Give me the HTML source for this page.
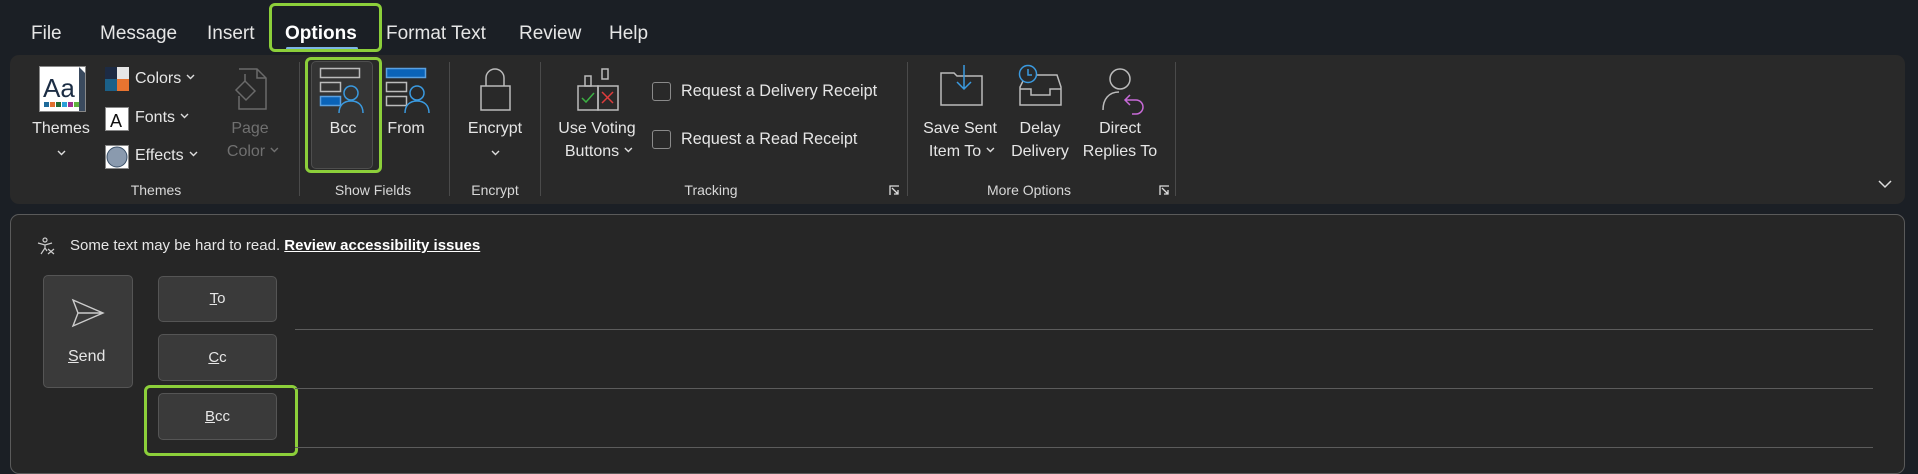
<!DOCTYPE html>
<html><head><meta charset="utf-8"><style>
*{margin:0;padding:0;box-sizing:border-box}
body{width:1918px;height:461px;background:#1b1f25;font-family:"Liberation Sans",sans-serif;color:#e6e6e6;position:relative;overflow:hidden}
.a{position:absolute;white-space:nowrap}
.tab{font-size:19px;top:23px}
.rib{left:10px;top:55px;width:1895px;height:149px;background:#292929;border-radius:9px}
.lbl{font-size:15px;text-align:center;transform:translateX(-50%)}
.sep{width:1px;background:#4a4a4a;top:62px;height:134px}
.gl{font-size:14px;color:#d8d8d8;transform:translateX(-50%);top:182px}
.cb{width:19px;height:19px;border:1.5px solid #8a8a8a;border-radius:3px}
.panel{left:10px;top:214px;width:1895px;height:260px;background:#262626;border:1px solid #5a5a5a;border-radius:9px}
.btn{background:#3a3a3a;border:1px solid #555;border-radius:5px;font-size:15px;text-align:center}
.ln{height:1px;background:#5c5c5c;left:295px;width:1578px}
.green{border:3px solid #8ccf3a;border-radius:6px}
svg{position:absolute;overflow:visible}
svg.ch{position:static;display:inline-block;vertical-align:middle;margin-left:5px;margin-top:-3px}
</style></head><body>
<div class="a tab" style="left:31px">File</div>
<div class="a tab" style="left:100px">Message</div>
<div class="a tab" style="left:207px">Insert</div>
<div class="a tab" style="left:285px;font-weight:bold;color:#fff">Options</div>
<div class="a" style="left:286px;top:47px;width:72px;height:3px;background:#7cb6e6;border-radius:2px"></div>
<div class="a green" style="left:269px;top:3px;width:113px;height:49px"></div>
<div class="a tab" style="left:386px">Format Text</div>
<div class="a tab" style="left:519px">Review</div>
<div class="a tab" style="left:609px">Help</div>

<div class="a rib"></div>
<!-- Themes -->
<svg style="left:39px;top:66px" width="48" height="46"><rect x="0.5" y="0.5" width="46" height="45" fill="#fff" stroke="#888"/><path d="M40 1 L46 7 L46 45 L40 45Z" fill="#3a4a5e"/><text x="4" y="31" font-size="26" fill="#1c2d44" font-family="Liberation Sans">Aa</text><rect x="5" y="36" width="5" height="5" fill="#1e6a9a"/><rect x="11" y="36" width="5" height="5" fill="#e07030"/><rect x="17" y="36" width="5" height="5" fill="#226b34"/><rect x="23" y="36" width="5" height="5" fill="#2aa0d8"/><rect x="29" y="36" width="5" height="5" fill="#a03090"/><rect x="35" y="36" width="5" height="5" fill="#60b040"/></svg>
<div class="a lbl" style="left:61px;top:120px;font-size:16px">Themes</div>
<svg style="left:57px;top:150px" width="9" height="6" fill="none" stroke="#ddd" stroke-width="1.4"><path d="M1 1L4.5 4.5L8 1"/></svg>
<svg style="left:105px;top:67px" width="24" height="24"><rect width="12" height="12" fill="#1d2b44"/><rect x="12" width="12" height="12" fill="#e6e6e6"/><rect y="12" width="12" height="12" fill="#1b6088"/><rect x="12" y="12" width="12" height="12" fill="#e87430"/></svg>
<div class="a" style="left:135px;top:70px;font-size:16px">Colors<svg class="ch" width="9" height="6" fill="none" stroke="#ddd" stroke-width="1.4"><path d="M1 1L4.5 4.5L8 1"/></svg></div>
<svg style="left:105px;top:107px" width="24" height="24"><rect x="0.5" y="0.5" width="23" height="23" fill="#fff" stroke="#888"/><text x="5" y="20" font-size="18" fill="#111" font-family="Liberation Sans">A</text></svg>
<div class="a" style="left:135px;top:109px;font-size:16px">Fonts<svg class="ch" width="9" height="6" fill="none" stroke="#ddd" stroke-width="1.4"><path d="M1 1L4.5 4.5L8 1"/></svg></div>
<svg style="left:105px;top:145px" width="24" height="24"><rect x="0.5" y="0.5" width="23" height="23" fill="#fff" stroke="#888"/><circle cx="12" cy="12" r="10" fill="#8a9aae" stroke="#3a5068"/></svg>
<div class="a" style="left:135px;top:147px;font-size:16px">Effects<svg class="ch" width="9" height="6" fill="none" stroke="#ddd" stroke-width="1.4"><path d="M1 1L4.5 4.5L8 1"/></svg></div>
<svg style="left:233px;top:68px" width="34" height="42" fill="none" stroke="#6a6a6a" stroke-width="1.5"><path d="M6 1 H24 L33 10 V41 H6 V28"/><path d="M24 1 V10 H33"/><path d="M3 22 L12 13 L22 23 L13 32Z"/><path d="M12 13 V6"/></svg>
<div class="a lbl" style="left:250px;top:120px;color:#707070;font-size:16px">Page</div>
<div class="a lbl" style="left:253px;top:143px;color:#707070;font-size:16px">Color<svg class="ch" width="9" height="6" fill="none" stroke="#707070" stroke-width="1.4"><path d="M1 1L4.5 4.5L8 1"/></svg></div>
<div class="a gl" style="left:156px">Themes</div>
<div class="a sep" style="left:299px"></div>
<!-- Bcc -->
<div class="a" style="left:311px;top:61px;width:62px;height:108px;background:#343434;border:1px solid #4e4e4e;border-radius:5px"></div>
<div class="a green" style="left:305px;top:57px;width:77px;height:116px"></div>
<svg style="left:320px;top:68px" width="46" height="46" fill="none" stroke-width="1.5"><rect x="0.5" y="0.5" width="39" height="9" stroke="#bbb"/><rect x="0.5" y="14.5" width="20" height="9" stroke="#bbb"/><rect x="0.5" y="28.5" width="20" height="9" fill="#0a63b8" stroke="#5aa0e0"/><circle cx="31" cy="25" r="7" stroke="#3a9ae0"/><path d="M19 45 C19 37 24 33 31 33 C38 33 43 37 43 45" stroke="#3a9ae0"/></svg>
<div class="a lbl" style="left:343px;top:120px;font-size:16px">Bcc</div>
<svg style="left:386px;top:68px" width="46" height="46" fill="none" stroke-width="1.5"><rect x="0.5" y="0.5" width="39" height="9" fill="#0a63b8" stroke="#5aa0e0"/><rect x="0.5" y="14.5" width="20" height="9" stroke="#bbb"/><rect x="0.5" y="28.5" width="20" height="9" stroke="#bbb"/><circle cx="31" cy="25" r="7" stroke="#3a9ae0"/><path d="M19 45 C19 37 24 33 31 33 C38 33 43 37 43 45" stroke="#3a9ae0"/></svg>
<div class="a lbl" style="left:406px;top:120px;font-size:16px">From</div>
<div class="a gl" style="left:373px">Show Fields</div>
<div class="a sep" style="left:449px"></div>
<svg style="left:480px;top:68px" width="31" height="43" fill="none" stroke="#bbb" stroke-width="1.5"><path d="M6 18 V10 A9 9 0 0 1 24 10 V18"/><rect x="1" y="18" width="29" height="24"/></svg>
<div class="a lbl" style="left:495px;top:120px;font-size:16px">Encrypt</div>
<svg style="left:491px;top:150px" width="9" height="6" fill="none" stroke="#ddd" stroke-width="1.4"><path d="M1 1L4.5 4.5L8 1"/></svg>
<div class="a gl" style="left:495px">Encrypt</div>
<div class="a sep" style="left:540px"></div>
<!-- Voting -->
<svg style="left:577px;top:68px" width="42" height="44" fill="none" stroke="#bbb" stroke-width="1.5"><rect x="8" y="8" width="6" height="10"/><rect x="25" y="1" width="6" height="10"/><rect x="1" y="18" width="20" height="24"/><rect x="21" y="18" width="20" height="24"/><path d="M5 30 L9 34 L17 25" stroke="#3cb043"/><path d="M25 24 L36 35 M36 24 L25 35" stroke="#e03c3c"/></svg>
<div class="a lbl" style="left:597px;top:120px;font-size:16px">Use Voting</div>
<div class="a lbl" style="left:599px;top:143px;font-size:16px">Buttons<svg class="ch" width="9" height="6" fill="none" stroke="#ddd" stroke-width="1.4"><path d="M1 1L4.5 4.5L8 1"/></svg></div>
<div class="a cb" style="left:652px;top:82px"></div>
<div class="a" style="left:681px;top:82px;font-size:16.2px">Request a Delivery Receipt</div>
<div class="a cb" style="left:652px;top:130px"></div>
<div class="a" style="left:681px;top:130px;font-size:16.2px">Request a Read Receipt</div>
<div class="a gl" style="left:711px">Tracking</div>
<svg style="left:889px;top:185px" width="11" height="11" fill="none" stroke="#ddd" stroke-width="1.3"><path d="M1 10 V1 H10 M3 3 L9 9 M5 9 H9 V5"/></svg>
<div class="a sep" style="left:907px"></div>
<!-- More options -->
<svg style="left:940px;top:65px" width="44" height="42" fill="none" stroke="#bbb" stroke-width="1.5"><path d="M1 8 H14 L17 11 H42 V40 H1Z"/><path d="M24 0 V24 M17 17 L24 24 L31 17" stroke="#3a9ae0"/></svg>
<div class="a lbl" style="left:960px;top:120px;font-size:16px">Save Sent</div>
<div class="a lbl" style="left:962px;top:143px;font-size:16px">Item To<svg class="ch" width="9" height="6" fill="none" stroke="#ddd" stroke-width="1.4"><path d="M1 1L4.5 4.5L8 1"/></svg></div>
<svg style="left:1018px;top:65px" width="45" height="42" fill="none" stroke-width="1.5"><path d="M14 10 H39 L43 22 V40 H2 V22 L6 14" stroke="#bbb"/><path d="M2 24 H13 V30 H32 V24 H43" stroke="#bbb"/><circle cx="10" cy="9" r="8.5" stroke="#3a9ae0" fill="#292929"/><path d="M10 4 V10 H14" stroke="#3a9ae0"/></svg>
<div class="a lbl" style="left:1040px;top:120px;font-size:16px">Delay</div>
<div class="a lbl" style="left:1040px;top:143px;font-size:16px">Delivery</div>
<svg style="left:1102px;top:68px" width="44" height="44" fill="none" stroke-width="1.5"><circle cx="18" cy="11" r="10" stroke="#bbb"/><path d="M1 42 C1 31 7 24 17 24" stroke="#bbb"/><path d="M28 27 L23 32 L28 37 M23 32 H34 A7 7 0 0 1 34 46 H30" stroke="#c86ad8"/></svg>
<div class="a lbl" style="left:1120px;top:120px;font-size:16px">Direct</div>
<div class="a lbl" style="left:1120px;top:143px;font-size:16px">Replies To</div>
<div class="a gl" style="left:1029px">More Options</div>
<svg style="left:1159px;top:185px" width="11" height="11" fill="none" stroke="#ddd" stroke-width="1.3"><path d="M1 10 V1 H10 M3 3 L9 9 M5 9 H9 V5"/></svg>
<div class="a sep" style="left:1175px"></div>
<svg style="left:1878px;top:180px" width="14" height="9" fill="none" stroke="#ddd" stroke-width="1.5"><path d="M1 1 L7 7 L13 1"/></svg>

<!-- Body -->
<div class="a panel"></div>
<svg style="left:37px;top:237px" width="18" height="18" fill="none" stroke="#ccc" stroke-width="1.2"><circle cx="8" cy="3" r="2"/><path d="M1 6 L8 8 L15 6 M8 8 V11 L4 17 M8 11 L10 14 M11 12 L17 17 M17 12 L11 17"/></svg>
<div class="a" style="left:70px;top:237px;font-size:15px">Some text may be hard to read. <b style="text-decoration:underline;color:#fff">Review accessibility issues</b></div>
<div class="a btn" style="left:43px;top:275px;width:90px;height:113px"></div>
<svg style="left:72px;top:299px" width="32" height="28" fill="none" stroke="#ccc" stroke-width="1.4"><path d="M1 1 L31 14 L1 27 L6 14Z M6 14 H31"/></svg>
<div class="a" style="left:68px;top:348px;font-size:16px"><u>S</u>end</div>
<div class="a btn" style="left:158px;top:276px;width:119px;height:46px;line-height:44px"><u>T</u>o</div>
<div class="a btn" style="left:158px;top:334px;width:119px;height:47px;line-height:45px"><u>C</u>c</div>
<div class="a btn" style="left:158px;top:393px;width:119px;height:47px;line-height:45px"><u>B</u>cc</div>
<div class="a green" style="left:144px;top:385px;width:154px;height:71px"></div>
<div class="a ln" style="top:329px"></div>
<div class="a ln" style="top:388px"></div>
<div class="a ln" style="top:447px"></div>
</body></html>
